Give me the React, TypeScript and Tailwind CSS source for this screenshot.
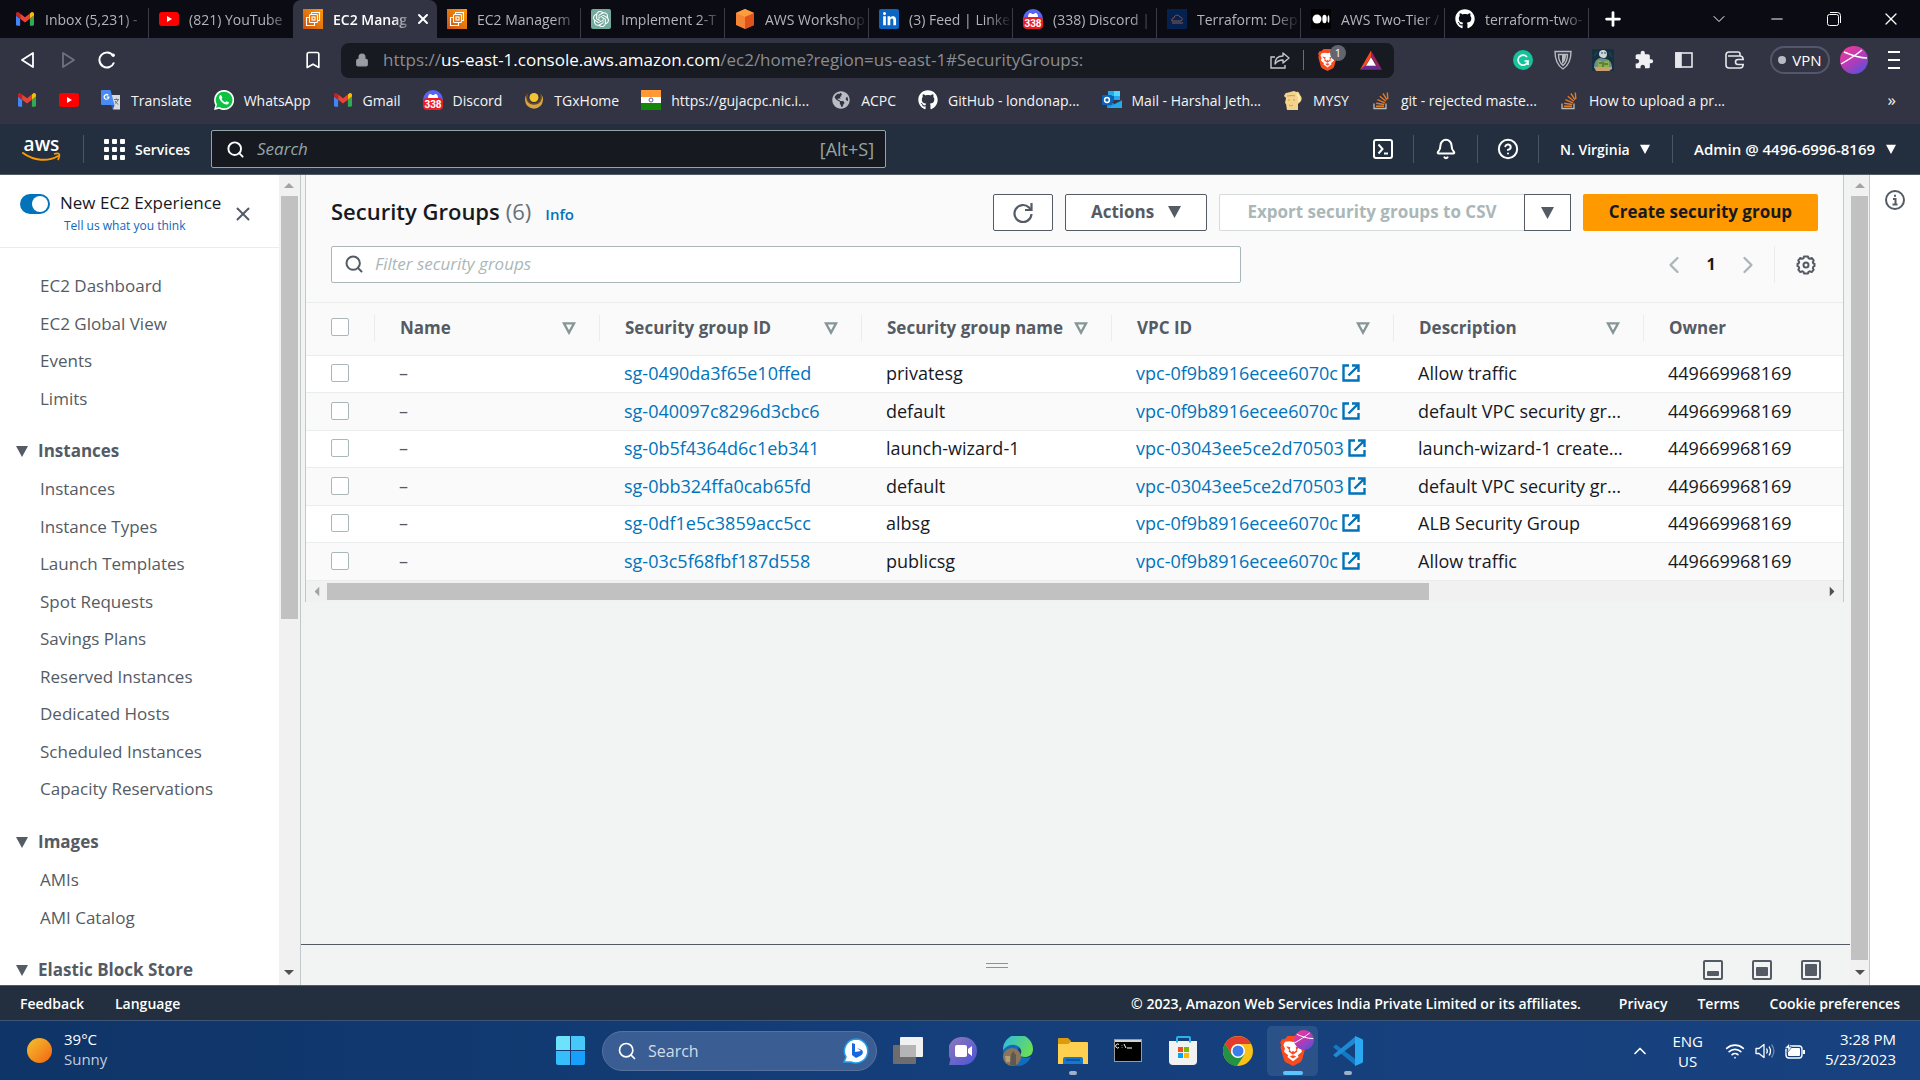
import { useState, type ReactNode } from 'react'
import {
  Bell,
  Bookmark,
  ChevronDown,
  ChevronLeft,
  ChevronRight,
  ChevronUp,
  CircleHelp,
  Lock,
  Minus,
  Plus,
  Search,
  Wifi,
  X,
} from 'lucide-react'
import { FaGithub, FaLinkedinIn, FaGlobeAmericas } from 'react-icons/fa'
import { SiOpenai } from 'react-icons/si'

/* ---------- brand icons ---------- */

const GmailIcon = () => (
  <svg viewBox="0 0 24 18" className="w-[18px] h-[14px] mx-px">
    <path d="M1.600 18h3.900V8.600L0 4.400v12C0 17.300.7 18 1.600 18z" fill="#4285f4" />
    <path d="M18.500 18h3.900c.9 0 1.600-.7 1.600-1.600v-12l-5.500 4.200z" fill="#34a853" />
    <path d="M18.500 1.600v7L24 4.400V2.200c0-2-2.300-3.200-3.900-2z" fill="#fbbc04" />
    <path d="M5.500 8.600v-7L12 6.500l6.500-4.900v7L12 13.500z" fill="#ea4335" />
    <path d="M0 2.200v2.200l5.500 4.200v-7L3.900.2C2.300-1 0 .2 0 2.200z" fill="#c5221f" />
  </svg>
)

const YoutubeIcon = () => (
  <svg viewBox="0 0 20 20" className="size-5">
    <rect y="3" width="20" height="14" rx="3" fill="#f00" />
    <path d="M8 7v6l5-3z" fill="#fff" />
  </svg>
)

const Ec2Icon = () => (
  <svg viewBox="0 0 20 20" className="size-5">
    <defs>
      <linearGradient id="ec2" x1="0" y1="1" x2="1" y2="0">
        <stop offset="0" stopColor="#c8511b" />
        <stop offset="1" stopColor="#f90" />
      </linearGradient>
    </defs>
    <rect width="20" height="20" fill="url(#ec2)" />
    <g fill="none" stroke="#fff" strokeWidth="1.100">
      <path d="M6.500 8.500h-3v8h8v-3" />
      <rect x="6.500" y="5.500" width="8" height="8" rx="1" />
      <rect x="9" y="8" width="3" height="3" />
      <path d="M8.500 5.500v-2h8v8h-2" />
    </g>
  </svg>
)

const OpenAiIcon = () => (
  <span className="size-5 rounded-xs bg-[#74aa9c] grid place-items-center">
    <SiOpenai className="size-4 text-white" />
  </span>
)

const WorkshopIcon = () => (
  <svg viewBox="0 0 20 20" className="size-5">
    <path d="M10 0l9 4v12l-9 4-9-4V4z" fill="#f58536" />
    <path d="M10 0l9 4-9 4-9-4z" fill="#ff9d3c" />
    <path d="M10 8l9-4v12l-9 4z" fill="#e0521b" />
  </svg>
)

const LinkedInIcon = () => (
  <span className="grid size-5 place-items-center rounded-xs bg-[#0a66c2]">
    <FaLinkedinIn className="size-[15px] text-white" />
  </span>
)

const DiscordIcon = () => (
  <svg viewBox="0 0 20 20" className="size-5">
    <circle cx="10" cy="10" r="10" fill="#5865f2" />
    <path d="M5 9c0-4 1-5 3-5l1 1h2l1-1c2 0 3 1 3 5z" fill="#fff" />
    <rect y="8" width="20" height="12" rx="4" fill="#ed1c24" />
    <text x="10" y="18" fontSize="10" fontWeight="700" fill="#fff" textAnchor="middle" fontFamily="Roboto, sans-serif">
      338
    </text>
  </svg>
)

const TerraformTabIcon = () => (
  <svg viewBox="0 0 20 20" className="size-5">
    <rect width="20" height="20" fill="#04214f" />
    <path d="M5 12c-1-2 1-3 2-3 0-3 5-4 6-1 2 0 3 3 1 4zM5 14h11" fill="none" stroke="#8a5a4a" strokeWidth="1" />
  </svg>
)

const MediumIcon = () => (
  <svg viewBox="0 0 20 20" className="size-5">
    <rect width="20" height="20" fill="#000" />
    <circle cx="6" cy="10" r="4.500" fill="#fff" />
    <ellipse cx="13.500" cy="10" rx="2.200" ry="4.200" fill="#fff" />
    <ellipse cx="17.500" cy="10" rx=".9" ry="3.800" fill="#fff" />
  </svg>
)

const GithubIcon = () => <FaGithub className="size-5 text-white" />

const TranslateIcon = () => (
  <svg viewBox="0 0 20 20" className="size-5">
    <path d="M8 5h11v14.500h-7z" fill="#d8dade" />
    <path d="M1 0h8.500l4 15H1a1 1 0 0 1-1-1V1a1 1 0 0 1 1-1z" fill="#4a8af4" />
    <path d="M10 15h3.500l-1.500 4.500z" fill="#2a56c6" />
    <path d="M8.500 6.500H5.800v1.200h1.300a1.700 1.700 0 1 1-.4-2l1-.9a3 3 0 1 0 .8 1.700z" fill="#fff" />
    <path d="M13 9.500h5M15.500 8.500v1M17 9.500c-.5 2-2 3.500-3 4M14 11l3 3.500" stroke="#6a7480" strokeWidth="1" fill="none" />
  </svg>
)

const WhatsappIcon = () => (
  <svg viewBox="0 0 20 20" className="size-5">
    <path d="M10 0a10 10 0 0 0-8.600 15L0 20l5.200-1.300A10 10 0 1 0 10 0z" fill="#fff" />
    <path d="M10 1.700a8.300 8.300 0 0 0-7 12.700l-.9 3.400 3.500-.9A8.300 8.300 0 1 0 10 1.700z" fill="#0dc143" />
    <path
      d="M7.300 5.500c-.3-.6-1-.5-1.500 0-1.500 1.500-.7 3.500 1.200 5.700 2.200 2.600 5 4 6.800 3 1-.6 1.200-1.500 1-1.900l-2.200-1.100c-.5 0-.8.9-1.300 1.100-1.400-.3-3.200-2-3.700-3.300.1-.5.8-.9.700-1.400z"
      fill="#fff"
    />
  </svg>
)

const TgxIcon = () => (
  <svg viewBox="0 0 20 20" className="size-5">
    <path d="M3 4a9 9 0 1 0 14 0c1 7-1 10-7 10S2 11 3 4z" fill="#d9a441" />
    <circle cx="10" cy="7.500" r="4.500" fill="#f3c52f" />
    <path d="M3 4c-1 6 2 10 7 10s8-4 7-10" fill="none" stroke="#6b4a1d" strokeWidth="1.500" />
  </svg>
)

const IndiaIcon = () => (
  <svg viewBox="0 0 20 20" className="size-5">
    <path d="M0 0h20v7H0z" fill="#ff9933" />
    <path d="M0 7h20v7H0z" fill="#fff" />
    <path d="M0 13h20v7H0z" fill="#138808" />
    <circle cx="10" cy="10" r="2" fill="none" stroke="#5b5bb0" />
  </svg>
)

const GlobeIcon = () => <FaGlobeAmericas className="size-[18px] mx-px text-[#b9bcc2]" />

const OutlookIcon = () => (
  <svg viewBox="0 0 20 20" className="size-5">
    <path d="M6 1h12v9H6z" fill="#28a8ea" />
    <path d="M12 1h6v5h-6z" fill="#50d9ff" />
    <path d="M6 6h6v6H6z" fill="#0364b8" />
    <path d="M5 10l7.500 4L20 10v8H5z" fill="#1490df" />
    <path d="M5 18l15-7v7z" fill="#28a8ea" />
    <rect y="5" width="10" height="10" rx="1" fill="#0a63b8" />
    <circle cx="5" cy="10" r="2.400" fill="none" stroke="#fff" strokeWidth="1.500" />
  </svg>
)

const MysyIcon = () => (
  <svg viewBox="0 0 20 20" className="size-5">
    <path d="M2 4c1-2 4-1 5-2 2 0 4-2 6 0 3-1 3 1 4 3 2 2 2 4 1 6l-3 3v6H4l-1-6-1-1 1-5-2-2z" fill="#f3d48a" />
    <path d="M4 6c3 0 5-1 8 0M5 10h2M10 10h2M6 15c2 1 3 1 4 0" stroke="#c9985a" fill="none" />
    <path d="M14 4c2 2 3 4 2 8" stroke="#fbeab8" strokeWidth="2" fill="none" />
  </svg>
)

const StackIcon = () => (
  <svg viewBox="0 0 20 20" className="size-5">
    <path d="M3 13.500v5h12v-5" fill="none" stroke="#bcbbbb" strokeWidth="1.300" />
    <path
      d="M5 16.200h8M5.200 13.200l8 1.300M6.400 9.700l7.500 3.200M8.800 6.300l6.100 5M12 3.500l4 6.300M16.300 2.500l.5 6.500"
      stroke="#e07b28"
      strokeWidth="1.400"
    />
  </svg>
)

const BraveIcon = ({ className }: { className: string }) => (
  <svg viewBox="0 0 24 28" className={className}>
    <path d="M7 0h10l3 3 2-.3L24 6l-1 2.500.7 2-3 11c-.5 1.500-1 2.300-2.300 3.200L12 28l-6.400-3.300c-1.300-.9-1.800-1.700-2.300-3.200l-3-11 .7-2L0 6l2-3.300L4 3z" fill="#fb4a1e" />
    <path
      d="M12 5.500l3-.7 4.500.6 1.500 3-1.500 3 .8 3.300-3.800 3.300.7 1.500-5.200 4-5.200-4 .7-1.500-3.800-3.300.8-3.300L3 8.400l1.500-3L9 4.800z"
      fill="#fff"
    />
    <path d="M5.500 9.500l4 1-.5 2.500 1.500 2L12 14l1.500 1 1.500-2-.5-2.500 4-1-3 3.500.7 1.500-4.200 3-4.200-3 .7-1.500zM9 19l3 2 3-2-3-1z" fill="#fb4a1e" />
  </svg>
)

const BatIcon = () => (
  <svg viewBox="0 0 24 21" className="h-[20px] w-[22px]">
    <path d="M12 0L0 21l6-4 6-10z" fill="#ff4724" />
    <path d="M12 0l12 21-6-4-6-10z" fill="#9e1f63" />
    <path d="M0 21h24l-6-4.500H6z" fill="#662d91" />
    <path d="M12 7.500l5.500 9.300h-11z" fill="#fff" />
  </svg>
)

const ProfileOrb = ({ id, className }: { id: string; className: string }) => (
  <svg viewBox="0 0 28 28" className={className}>
    <defs>
      <linearGradient id={id} x1="0.200" y1="0" x2="0.900" y2="1">
        <stop offset="0" stopColor="#f0389a" />
        <stop offset="0.500" stopColor="#b23bb8" />
        <stop offset="1" stopColor="#4b55e0" />
      </linearGradient>
    </defs>
    <circle cx="14" cy="14" r="14" fill={`url(#${id})`} />
    <path d="M1 18C8 14 16 9 22 4M4 6c7 3 14 6 23 6" fill="none" stroke="#fff" strokeWidth="1.400" />
  </svg>
)

const StatueIcon = () => (
  <svg viewBox="0 0 22 22" className="size-[22px]">
    <rect width="22" height="22" rx="1" fill="#123240" />
    <path d="M11 1c3 0 4 2 4 4s-1 4-3 4-5-1-5-4 2-4 4-4z" fill="#cdd6da" />
    <path d="M2 19c0-6 2-9 6-10l6 1c4 1 6 4 6 9z" fill="#6f8a93" />
    <path d="M9 4h2M12 4h2M5 3l-3 4M17 3l3 5" stroke="#2c4a55" />
    <path d="M6 11l5 2 6-2v7l-6 1-5-1z" fill="#8bb04a" />
    <path d="M11 13v6M7 14h3M12 15h4" stroke="#31551c" strokeWidth="1" />
    <path d="M2 18h18v2l-3 2H4z" fill="#c9a070" />
  </svg>
)

const CaretDown = ({ className }: { className: string }) => (
  <svg viewBox="0 0 12 12" className={className}>
    <path d="M0 1h12L6 12z" fill="currentColor" />
  </svg>
)

const ScrollArrow = ({ className }: { className: string }) => (
  <svg viewBox="0 0 10 5" className={className}>
    <path d="M0 0h10L5 5z" fill="currentColor" />
  </svg>
)

const ExternalIcon = () => (
  <svg viewBox="0 0 18 18" className="size-[18px] text-[#0073bb]" fill="none" stroke="currentColor" strokeWidth="2.400">
    <path d="M7 1.500H1.500v15h15V11M10 1.500h6.500V8M16 2L6.500 11.500" />
  </svg>
)

/* ---------- browser chrome ---------- */

const tabs: { title: string; icon: ReactNode; active?: boolean }[] = [
  { title: 'Inbox (5,231) -', icon: <GmailIcon /> },
  { title: '(821) YouTube', icon: <YoutubeIcon /> },
  { title: 'EC2 Manag', icon: <Ec2Icon />, active: true },
  { title: 'EC2 Managem', icon: <Ec2Icon /> },
  { title: 'Implement 2-T', icon: <OpenAiIcon /> },
  { title: 'AWS Workshop', icon: <WorkshopIcon /> },
  { title: '(3) Feed | Linke', icon: <LinkedInIcon /> },
  { title: '(338) Discord |', icon: <DiscordIcon /> },
  { title: 'Terraform: Dep', icon: <TerraformTabIcon /> },
  { title: 'AWS Two-Tier /', icon: <MediumIcon /> },
  { title: 'terraform-two-', icon: <GithubIcon /> },
]

const bookmarks: { label: string; icon: ReactNode }[] = [
  { label: 'Translate', icon: <TranslateIcon /> },
  { label: 'WhatsApp', icon: <WhatsappIcon /> },
  { label: 'Gmail', icon: <GmailIcon /> },
  { label: 'Discord', icon: <DiscordIcon /> },
  { label: 'TGxHome', icon: <TgxIcon /> },
  { label: 'https://gujacpc.nic.i...', icon: <IndiaIcon /> },
  { label: 'ACPC', icon: <GlobeIcon /> },
  { label: 'GitHub - londonap...', icon: <GithubIcon /> },
  { label: 'Mail - Harshal Jeth...', icon: <OutlookIcon /> },
  { label: 'MYSY', icon: <MysyIcon /> },
  { label: 'git - rejected maste...', icon: <StackIcon /> },
  { label: 'How to upload a pr...', icon: <StackIcon /> },
]

const TabBar = () => (
  <div className="flex h-[38px] shrink-0 items-stretch bg-[#0b0b14] pl-[5px] text-[14px] text-[#b4b4ba]">
    {tabs.map((tab, i) => (
      <button
        key={i}
        aria-label={tab.title}
        className={`flex w-36 items-center gap-2.5 pl-2.5 ${
          tab.active ? 'rounded-t-lg bg-[#323443] pr-1.5 font-semibold text-white' : ''
        }`}
      >
        <span className="shrink-0">{tab.icon}</span>
        <span className="min-w-0 flex-1 overflow-hidden text-left whitespace-nowrap [mask-image:linear-gradient(to_right,black_75%,transparent)]">
          {tab.title}
        </span>
        {tab.active && <X className="-ml-2 size-4 shrink-0" strokeWidth={3} />}
        {!tab.active && i !== 1 && <span className="-ml-2.5 mt-2 w-px self-stretch bg-[#3a3b46]" />}
      </button>
    ))}
    <button aria-label="New tab" className="ml-[13px] text-white">
      <Plus className="size-[22px]" strokeWidth={3} />
    </button>
    <div className="ml-auto flex items-center text-white">
      <button aria-label="Search tabs" className="grid w-[58px] place-items-center">
        <ChevronDown className="size-5" strokeWidth={1.2} />
      </button>
      <button aria-label="Minimize" className="grid w-[57px] place-items-center">
        <Minus className="size-[18px]" strokeWidth={1.3} />
      </button>
      <button aria-label="Restore" className="grid w-[57px] place-items-center">
        <svg viewBox="0 0 14 14" className="size-[14px]" fill="none" stroke="currentColor">
          <rect x=".5" y="2.500" width="11" height="11" rx="2" />
          <path d="M3 .5h7.500a3 3 0 0 1 3 3V11" />
        </svg>
      </button>
      <button aria-label="Close window" className="grid w-[58px] place-items-center">
        <X className="size-5" strokeWidth={1.5} />
      </button>
    </div>
  </div>
)

const Toolbar = () => (
  <div className="flex h-11 shrink-0 items-center bg-[#323443] pr-5 text-white">
    <div className="flex w-[341px] items-center pl-5">
      <button aria-label="Back" className="w-10">
        <svg viewBox="0 0 16 18" className="h-[18px] w-4" fill="none" stroke="#fff" strokeWidth="1.800" strokeLinejoin="round">
          <path d="M13 2v14L2 9z" />
        </svg>
      </button>
      <button aria-label="Forward" className="w-[38px]">
        <svg viewBox="0 0 16 18" className="h-[18px] w-4" fill="none" stroke="#70717d" strokeWidth="1.800" strokeLinejoin="round">
          <path d="M3 2v14l11-7z" />
        </svg>
      </button>
      <button aria-label="Reload">
        <svg viewBox="0 0 18 18" className="size-[18px]" fill="none" stroke="#fff" strokeWidth="2">
          <path d="M16 11.500A7.500 7.500 0 1 1 15 4.500" />
          <circle cx="15.200" cy="4.200" r="1.700" fill="#fff" stroke="none" />
        </svg>
      </button>
      <button aria-label="Bookmark this page" className="mr-[18px] ml-auto">
        <Bookmark className="size-5" />
      </button>
    </div>
    <div className="flex h-[35px] min-w-0 flex-1 items-center rounded-lg bg-[#181a21] pr-3 pl-[14px]">
      <Lock className="size-[14px] text-[#9a9ba3]" fill="currentColor" />
      <span className="ml-[14px] flex-1 text-[17px] whitespace-nowrap text-[#8b8c93]">
        https://<span className="text-white">us-east-1.console.aws.amazon.com</span>/ec2/home?region=us-east-1#SecurityGroups:
      </span>
      <button aria-label="Share" className="mr-[13px]">
        <svg viewBox="0 0 20 18" className="h-[18px] w-5" fill="none" stroke="#c5c6cb" strokeWidth="1.400">
          <path d="M5 6H1v11h14v-3" />
          <path d="M13 2l6 5-6 5V9c-4 0-6 1-8 4 0-5 3-8 8-8z" strokeLinejoin="round" />
        </svg>
      </button>
      <span className="mr-3.5 h-5 w-px bg-[#6c6d76]" />
      <button aria-label="Brave Shields" className="relative mr-[18px] w-6">
        <BraveIcon className="h-[22px] w-[19px]" />
        <span className="absolute -top-1 left-3 grid size-4 place-items-center rounded-full bg-[#62646f] text-[11px] text-white">1</span>
      </button>
      <button aria-label="Rewards">
        <BatIcon />
      </button>
    </div>
    <div className="ml-[119px] flex items-center">
      <span className="grid size-5 place-items-center rounded-full bg-[#15c39a]">
        <svg viewBox="0 0 12 12" className="size-3" fill="none" stroke="#fff" strokeWidth="1.600">
          <path d="M10 3a5 5 0 1 0 1 4H7.500M11 7v4" />
        </svg>
      </span>
      <svg viewBox="0 0 18 20" className="ml-[21px] h-5 w-[18px]" fill="none" stroke="#b9bac0" strokeWidth="1.400">
        <path d="M1 1.500h16C17 10 14.500 15.500 9 19 3.500 15.500 1 10 1 1.500z" />
        <path d="M4.500 4.500h9c0 5-1.500 8.500-4.500 11-3-2.500-4.500-6-4.500-11z" />
        <path d="M8 5h4c0 4-1 7-4 9z" fill="#b9bac0" stroke="none" />
      </svg>
      <span className="ml-5">
        <StatueIcon />
      </span>
      <svg viewBox="0 0 24 24" className="ml-5 size-5" fill="#f0f0f3">
        <path d="M20.500 11H19V7c0-1.100-.9-2-2-2h-4V3.500C13 2.120 11.880 1 10.500 1S8 2.120 8 3.500V5H4c-1.100 0-2 .9-2 2v3.800h1.500c1.490 0 2.700 1.210 2.700 2.700s-1.210 2.700-2.700 2.700H2V20c0 1.100.9 2 2 2h3.800v-1.500c0-1.490 1.210-2.700 2.700-2.700s2.700 1.210 2.700 2.700V22H17c1.100 0 2-.9 2-2v-4h1.500a2.500 2.500 0 0 0 0-5z" />
      </svg>
      <svg viewBox="0 0 18 16" className="ml-[21px] h-4 w-[18px]" fill="none" stroke="#e6e6ea" strokeWidth="1.600">
        <rect x="1" y="1" width="16" height="14" />
        <path d="M1 1h5v14H1z" fill="#e6e6ea" />
      </svg>
      <svg viewBox="0 0 20 18" className="ml-8 h-[18px] w-5" fill="none" stroke="#e6e6ea" strokeWidth="1.600">
        <path d="M15 5V3a2 2 0 0 0-2-2H4a3 3 0 0 0-3 3v10a3 3 0 0 0 3 3h11a3 3 0 0 0 3-3V8a3 3 0 0 0-3-3H3" />
        <path d="M19 8.500h-6a2.500 2.500 0 0 0 0 5h6" fill="#323443" />
      </svg>
      <button className="ml-[25px] flex h-[28px] w-[60px] items-center justify-center gap-1.5 rounded-full border-2 border-[#53556a] text-[15px]">
        <span className="size-2 rounded-full bg-[#b9bac4]" />
        VPN
      </button>
      <ProfileOrb id="orb-nav" className="ml-2.5 size-7" />
      <button aria-label="Menu" className="ml-5 flex w-3 flex-col gap-1.5">
        <span className="h-0.5 bg-white" />
        <span className="h-0.5 bg-white" />
        <span className="h-0.5 bg-white" />
      </button>
    </div>
  </div>
)

const BookmarksBar = () => (
  <div className="flex h-[42px] shrink-0 items-center gap-[22px] bg-[#323443] pr-6 pb-1.5 pl-[17px] text-[14px] whitespace-nowrap text-[#f4f4f6]">
    <a href="#gmail" aria-label="Gmail">
      <GmailIcon />
    </a>
    <a href="#youtube" aria-label="YouTube">
      <YoutubeIcon />
    </a>
    {bookmarks.map((b) => (
      <a key={b.label} href="#bookmark" className="flex items-center gap-2.5">
        {b.icon}
        {b.label}
      </a>
    ))}
    <button aria-label="More bookmarks" className="ml-auto text-[17px]">
      »
    </button>
  </div>
)

/* ---------- AWS console ---------- */

const AwsHeader = () => (
  <header className="flex h-[51px] shrink-0 items-center border-b border-[#545b64] bg-[#232f3e] text-[15px] font-semibold text-white">
    <a href="#home" aria-label="AWS home" className="flex w-[83px] flex-col items-center">
      <span className="text-[19px] leading-[16px] font-semibold">aws</span>
      <svg viewBox="0 0 40 11" className="h-[11px] w-10" fill="none" stroke="#f90" strokeWidth="2">
        <path d="M1 1c11 8 25 9 35 3" strokeLinecap="round" />
        <path d="M32 2c5-1.500 7-.5 4 6" strokeWidth="1.800" />
      </svg>
    </a>
    <span className="h-7 w-px bg-[#4a5562]" />
    <button className="ml-5 flex items-center gap-2.5 text-[14px]">
      <span className="grid grid-cols-3 gap-[3px]">
        {Array.from({ length: 9 }, (_, i) => (
          <span key={i} className="size-[5px] rounded-[1px] bg-white" />
        ))}
      </span>
      Services
    </button>
    <label className="ml-[21px] flex h-[38px] w-[675px] items-center rounded-xs border border-[#95a5a6] bg-[#16191f] px-3.5">
      <Search className="size-[19px]" strokeWidth={2.4} />
      <input
        type="search"
        aria-label="Search"
        placeholder="Search"
        className="ml-3 min-w-0 flex-1 bg-transparent text-[17px] font-normal italic outline-none placeholder:text-[#95a5a6]"
      />
      <span className="mr-[-3px] text-[18px] font-normal text-[#95a5a6]">[Alt+S]</span>
    </label>
    <div className="ml-auto flex items-center">
      <button aria-label="CloudShell" className="grid w-[60px] place-items-center">
        <svg viewBox="0 0 20 20" className="size-5" fill="none" stroke="currentColor" strokeWidth="2">
          <rect x="1" y="1" width="18" height="18" rx="2" />
          <path d="M5.500 5.500l4 4.500-4 4.500M11 14.500h4" />
        </svg>
      </button>
      <span className="h-7 w-px bg-[#4a5562]" />
      <button aria-label="Notifications" className="grid w-[63px] place-items-center">
        <Bell className="size-[22px]" strokeWidth={2.2} />
      </button>
      <span className="h-7 w-px bg-[#4a5562]" />
      <button aria-label="Help" className="grid w-[60px] place-items-center">
        <CircleHelp className="size-[22px]" strokeWidth={2.2} />
      </button>
      <span className="h-7 w-px bg-[#4a5562]" />
      <button className="flex w-[133px] items-center justify-between pr-[22px] pl-[21px] text-[14px]">
        N. Virginia <CaretDown className="size-2.5" />
      </button>
      <span className="h-7 w-px bg-[#4a5562]" />
      <button className="flex w-[247px] items-center justify-between pr-6 pl-[21px]">
        Admin @ 4496-6996-8169 <CaretDown className="size-2.5" />
      </button>
    </div>
  </header>
)

const navGroups: { heading?: string; items: string[] }[] = [
  { items: ['EC2 Dashboard', 'EC2 Global View', 'Events', 'Limits'] },
  {
    heading: 'Instances',
    items: [
      'Instances',
      'Instance Types',
      'Launch Templates',
      'Spot Requests',
      'Savings Plans',
      'Reserved Instances',
      'Dedicated Hosts',
      'Scheduled Instances',
      'Capacity Reservations',
    ],
  },
  { heading: 'Images', items: ['AMIs', 'AMI Catalog'] },
  { heading: 'Elastic Block Store', items: [] },
]

const Sidebar = () => {
  const [newExperience, setNewExperience] = useState(true)

  return (
    <aside className="flex w-[301px] shrink-0 border-r border-[#c3c9cb] bg-white">
      <div className="min-w-0 flex-1 overflow-hidden">
        <div className="flex h-[73px] items-start border-b border-[#eaeded] pt-4 pl-5">
          <label className="flex items-start gap-2.5">
            <input
              type="checkbox"
              aria-label="New EC2 Experience"
              checked={newExperience}
              onChange={(e) => setNewExperience(e.target.checked)}
              className="peer sr-only"
            />
            <span className="mt-[3px] flex h-5 w-[30px] justify-end rounded-full bg-[#0073bb] p-0.5">
              <span className="size-4 rounded-full bg-white" />
            </span>
            <span className="text-[17px] leading-[24px] whitespace-nowrap text-[#16191f]">
              New EC2 Experience
              <a href="#feedback" className="block pl-1 text-[12px] leading-[22px] text-[#1166bb]">
                Tell us what you think
              </a>
            </span>
          </label>
          <button aria-label="Close navigation" className="mt-3 mr-[25px] ml-auto text-[#545b64]">
            <X className="size-[22px]" strokeWidth={2.2} />
          </button>
        </div>
        <nav className="mt-[19px] text-[17px] text-[#545b64]">
          {navGroups.map((group, i) => (
            <div key={i} className="mb-[15px]">
              {group.heading && (
                <button className="flex h-[38px] items-center gap-2.5 pl-4 font-bold">
                  <CaretDown className="size-3" />
                  {group.heading}
                </button>
              )}
              <ul>
                {group.items.map((item) => (
                  <li key={item} className="flex h-[38px] items-center pl-10 even:h-[37px]">
                    <a href="#nav">{item}</a>
                  </li>
                ))}
              </ul>
            </div>
          ))}
        </nav>
      </div>
      <div className="flex w-[21px] flex-col items-center bg-[#f1f1f1] pr-px">
        <ScrollArrow className="mt-2 h-[5px] w-2.5 rotate-180 text-[#a3a3a3]" />
        <div className="mt-2 h-[423px] w-[17px] bg-[#c1c1c1]" />
        <ScrollArrow className="mt-auto mb-2.5 h-[5px] w-2.5 text-[#505050]" />
      </div>
    </aside>
  )
}

const columns = [
  { label: 'Name', width: 'w-[225px]' },
  { label: 'Security group ID', width: 'w-[262px]' },
  { label: 'Security group name', width: 'w-[250px]' },
  { label: 'VPC ID', width: 'w-[282px]' },
  { label: 'Description', width: 'w-[250px]' },
]

const rows = [
  { id: 'sg-0490da3f65e10ffed', name: 'privatesg', vpc: 'vpc-0f9b8916ecee6070c', description: 'Allow traffic' },
  { id: 'sg-040097c8296d3cbc6', name: 'default', vpc: 'vpc-0f9b8916ecee6070c', description: 'default VPC security gr…' },
  { id: 'sg-0b5f4364d6c1eb341', name: 'launch-wizard-1', vpc: 'vpc-03043ee5ce2d70503', description: 'launch-wizard-1 create…' },
  { id: 'sg-0bb324ffa0cab65fd', name: 'default', vpc: 'vpc-03043ee5ce2d70503', description: 'default VPC security gr…' },
  { id: 'sg-0df1e5c3859acc5cc', name: 'albsg', vpc: 'vpc-0f9b8916ecee6070c', description: 'ALB Security Group' },
  { id: 'sg-03c5f68fbf187d558', name: 'publicsg', vpc: 'vpc-0f9b8916ecee6070c', description: 'Allow traffic' },
]

const Checkbox = ({ label }: { label: string }) => (
  <input
    type="checkbox"
    aria-label={label}
    className="block size-[18px] appearance-none rounded-xs border border-[#aab7b8] bg-white checked:bg-[#0073bb]"
  />
)

const SecurityGroupsTable = () => (
  <table className="w-full table-fixed border-collapse text-left text-[18px] leading-6 whitespace-nowrap text-[#16191f]">
    <thead>
      <tr className="h-[53px] border-y border-[#eaeded] text-[17px] text-[#545b64]">
        <th className="w-[68px] pb-1 pl-[25px]">
          <Checkbox label="Select all" />
        </th>
        {columns.map((col) => (
          <th key={col.label} className={`${col.width} p-0 pb-0.5 font-bold`}>
            <div className="flex h-[26px] items-center justify-between border-l border-[#eaeded] pr-[23px] pl-[25px]">
              {col.label}
              <svg viewBox="0 0 12 12" className="size-3.5 shrink-0" fill="none" stroke="#879596" strokeWidth="2">
                <path d="M1.600 2h8.800L6 10z" />
              </svg>
            </div>
          </th>
        ))}
        <th className="p-0 pb-0.5 font-bold">
          <div className="flex h-[26px] items-center border-l border-[#eaeded] pl-[25px]">Owner</div>
        </th>
      </tr>
    </thead>
    <tbody>
      {rows.map((row) => (
        <tr key={row.id} className="h-[37px] border-b border-[#eaeded] bg-white even:h-[38px] even:bg-[#fafafa]">
          <td className="pb-0.5 pl-[25px]">
            <Checkbox label={`Select ${row.id}`} />
          </td>
          <td className="p-0 pb-0.5 pl-[25px] text-[#545b64]">–</td>
          <td className="p-0 pb-0.5 pl-[25px]">
            <a href="#sg" className="text-[#0073bb]">
              {row.id}
            </a>
          </td>
          <td className="p-0 pb-0.5 pl-[25px]">{row.name}</td>
          <td className="p-0 pb-0.5 pl-[25px]">
            <a href="#vpc" className="flex items-center gap-1 text-[#0073bb]">
              {row.vpc}
              <ExternalIcon />
            </a>
          </td>
          <td className="p-0 pb-0.5 pl-[25px]">{row.description}</td>
          <td className="p-0 pb-0.5 pl-[25px]">449669968169</td>
        </tr>
      ))}
    </tbody>
  </table>
)

const PanelIcon = ({ y }: { y: number }) => (
  <svg viewBox="0 0 20 20" className="size-5" fill="none" stroke="#545b64" strokeWidth="2">
    <rect x="1" y="1" width="18" height="18" rx="1" />
    <rect x="4" y={y} width="12" height={16 - y} rx="1" fill="#545b64" stroke="none" />
  </svg>
)

const MainPanel = () => (
  <main className="flex min-w-0 flex-1 flex-col bg-[#f2f3f3]">
    <section className="mr-1.5 ml-1 border-x border-[#c3c9cb] bg-[#fafafa]">
      <div className="flex items-center gap-3 pt-[19px] pr-[25px] pl-[25px] text-[17px] leading-6 font-bold whitespace-nowrap text-[#545b64]">
        <h1 className="mr-auto flex items-baseline text-[22px] font-semibold text-[#16191f]">
          Security Groups
          <span className="ml-1.5 font-normal text-[#687078]">(6)</span>
          <a href="#info" className="ml-3.5 text-[15px] text-[#0073bb]">
            Info
          </a>
        </h1>
        <button aria-label="Refresh" className="grid h-[37px] w-[60px] place-items-center rounded-xs border border-[#545b64] bg-white">
          <svg viewBox="0 0 20 20" className="size-5" fill="none" stroke="currentColor" strokeWidth="2.200">
            <path d="M18.500 11A8.500 8.500 0 1 1 16 4.500L18 6.500" />
            <path d="M18.500 0v7H12" />
          </svg>
        </button>
        <button className="flex h-[37px] w-[142px] items-center justify-center gap-3.5 rounded-xs border border-[#545b64] bg-white pb-0.5">
          Actions <CaretDown className="size-[13px]" />
        </button>
        <div className="flex">
          <button disabled className="h-[37px] w-[305px] rounded-l-xs border border-r-0 border-[#d5dbdb] bg-white pb-0.5 text-[#aab7b8]">
            Export security groups to CSV
          </button>
          <button aria-label="Export options" className="grid h-[37px] w-[47px] place-items-center border border-[#545b64] bg-white">
            <CaretDown className="size-[13px]" />
          </button>
        </div>
        <button className="h-[37px] w-[235px] rounded-xs bg-[#ff9900] pb-0.5 text-[#16191f]">Create security group</button>
      </div>
      <div className="flex items-center pt-[15px] pr-[27px] pb-[19px] pl-[25px]">
        <label className="flex h-[37px] w-[910px] items-center rounded-xs border border-[#aab7b8] bg-white pb-0.5 pl-3 text-[#545b64]">
          <Search className="size-5" strokeWidth={2.4} />
          <input
            aria-label="Filter security groups"
            placeholder="Filter security groups"
            className="ml-[11px] flex-1 bg-transparent text-[17px] italic outline-none placeholder:text-[#aab7b8]"
          />
        </label>
        <div className="ml-auto flex items-center text-[16px] leading-6 font-bold text-[#16191f]">
          <button aria-label="Previous page" className="text-[#aab7b8]">
            <ChevronLeft className="size-7" />
          </button>
          <span className="w-[46px] pb-0.5 text-center">1</span>
          <button aria-label="Next page" className="text-[#aab7b8]">
            <ChevronRight className="size-7" />
          </button>
          <span className="ml-3 h-[37px] w-px bg-[#eaeded]" />
          <button aria-label="Preferences" className="ml-[21px] text-[#545b64]">
            <svg viewBox="0 0 20 20" className="size-5" fill="none" stroke="currentColor" strokeWidth="2" strokeLinejoin="round">
              <path d="M8 1.500h4l.5 1.700 1.500.6 1.700-.8 2 2.400-.9 1.500.5 1.500 1.200.4v2.400l-1.200.5-.5 1.500.9 1.500-2 2.400-1.700-.8-1.500.6-.5 1.600H8l-.5-1.600-1.500-.6-1.700.8-2-2.400.9-1.500-.5-1.500-1.200-.5V8.800l1.200-.4.5-1.500-.9-1.500 2-2.400 1.700.8 1.500-.6z" />
              <circle cx="10" cy="10" r="2.500" />
            </svg>
          </button>
        </div>
      </div>
      <SecurityGroupsTable />
      <div className="flex h-[21px] items-center bg-[#f1f1f1]">
        <ScrollArrow className="ml-1.5 h-[5px] w-2.5 rotate-90 text-[#a3a3a3]" />
        <div className="ml-[5px] h-[17px] w-[1102px] bg-[#c1c1c1]" />
        <ScrollArrow className="mr-1.5 ml-auto h-[5px] w-2.5 -rotate-90 text-[#505050]" />
      </div>
    </section>
    <div className="mt-auto flex h-[41px] items-start border-t border-[#545b64]">
      <div className="flex flex-1 justify-center pt-[18px]">
        <span className="h-[5px] w-[22px] border-y border-[#879596]" />
      </div>
      <div className="flex gap-[29px] pt-[15px] pr-[29px] pl-2.5">
        <button aria-label="Small split panel">
          <PanelIcon y={11} />
        </button>
        <button aria-label="Medium split panel">
          <PanelIcon y={7} />
        </button>
        <button aria-label="Full split panel">
          <PanelIcon y={4} />
        </button>
      </div>
    </div>
  </main>
)

const Footer = () => (
  <footer className="flex h-[35px] shrink-0 items-center border-t border-[#545b64] bg-[#232f3e] px-5 text-[14px] font-semibold text-white">
    <a href="#feedback" className="w-[95px]">
      Feedback
    </a>
    <a href="#language">Language</a>
    <span className="mr-[38px] ml-auto">© 2023, Amazon Web Services India Private Limited or its affiliates.</span>
    <a href="#privacy" className="mr-[30px]">
      Privacy
    </a>
    <a href="#terms" className="mr-[30px]">
      Terms
    </a>
    <a href="#cookies">Cookie preferences</a>
  </footer>
)

/* ---------- Windows taskbar ---------- */

const taskbarApps: { name: string; icon: ReactNode; state?: 'open' | 'focused' }[] = [
  {
    name: 'Task View',
    icon: (
      <svg viewBox="0 0 30 28" className="h-7 w-[30px]">
        <rect y="8" width="23" height="19" rx="1" fill="#6d6d6d" />
        <rect x="7" width="23" height="20" rx="1" fill="#f1f1f1" />
        <path d="M7 8h16v12H7z" fill="#b5b5b5" />
      </svg>
    ),
  },
  {
    name: 'Chat',
    icon: (
      <svg viewBox="0 0 28 28" className="size-7">
        <defs>
          <linearGradient id="chat" x1="0" y1="0" x2="1" y2="1">
            <stop offset="0" stopColor="#8f7ab8" />
            <stop offset="1" stopColor="#4b53d8" />
          </linearGradient>
        </defs>
        <path d="M14 0a14 14 0 1 1 0 28H0l1.500-6A14 14 0 0 1 14 0z" fill="url(#chat)" />
        <rect x="6" y="8" width="12" height="12" rx="2" fill="#fff" />
        <path d="M19 12l4-3v10l-4-3z" fill="#fff" />
      </svg>
    ),
  },
  {
    name: 'Microsoft Edge',
    icon: (
      <svg viewBox="0 0 30 30" className="size-[30px]">
        <defs>
          <linearGradient id="edge" x1="0" y1="0" x2="1" y2="0.500">
            <stop offset="0" stopColor="#2bb8e8" />
            <stop offset="1" stopColor="#67dd5b" />
          </linearGradient>
        </defs>
        <path d="M0 15C1 7 12 5 17 11c-3 2-3 6 0 9 3 2 7 2 11 1-3 6-8 9-13 9A15 15 0 0 1 0 15z" fill="#0f6cbe" />
        <path d="M0 14A15 15 0 0 1 30 13c0 6-4 8-8 8-3 0-5-1-5-2 0 0 2-2 1-5C16 8 6 6 0 14z" fill="url(#edge)" />
        <circle cx="9" cy="21" r="9" fill="#8b7558" />
        <path d="M7 30l1-11 2-4 3 4v10z" fill="#5d5a56" />
        <path d="M2 20h5v6H3z" fill="#b29f73" />
      </svg>
    ),
  },
  {
    name: 'File Explorer',
    state: 'open',
    icon: (
      <svg viewBox="0 0 30 28" className="h-7 w-[30px]">
        <path d="M0 2a1 1 0 0 1 1-1h9l3 3v4H0z" fill="#dc9b0b" />
        <path d="M0 7h10l3-2h16a1 1 0 0 1 1 1v21H0z" fill="#ffd04f" />
        <path d="M5 27v-5a2 2 0 0 1 2-2h16a2 2 0 0 1 2 2v5z" fill="#1577cf" />
        <path d="M8 23h14" stroke="#0b4b92" strokeWidth="1.500" />
      </svg>
    ),
  },
  {
    name: 'Command Prompt',
    icon: (
      <svg viewBox="0 0 28 24" className="h-6 w-7">
        <rect x=".5" y=".5" width="27" height="22" fill="#000" stroke="#9a9a9a" />
        <path d="M1 1h26v2H1z" fill="#d5d5d5" />
        <path d="M5 5.500a2 2 0 1 0 0 3M8 6v.5M8 8v.5M10 5l2 4M13 9h5" stroke="#fff" fill="none" />
      </svg>
    ),
  },
  {
    name: 'Microsoft Store',
    icon: (
      <svg viewBox="0 0 30 30" className="size-[30px]">
        <path d="M1 5h28v20a4 4 0 0 1-4 4H5a4 4 0 0 1-4-4z" fill="#f2f2f2" />
        <path d="M9 6.500V2a1 1 0 0 1 1-1h11a1 1 0 0 1 1 1v4.500" fill="none" stroke="#28b4e8" strokeWidth="2" />
        <path d="M10 11h5v5h-5z" fill="#f25022" />
        <path d="M16 11h5v5h-5z" fill="#7fba00" />
        <path d="M10 17h5v5h-5z" fill="#00a4ef" />
        <path d="M16 17h5v5h-5z" fill="#ffb900" />
      </svg>
    ),
  },
  {
    name: 'Google Chrome',
    icon: (
      <svg viewBox="0 0 30 30" className="size-[30px]">
        <circle cx="15" cy="15" r="15" fill="#fbc116" />
        <path d="M2 7.500a15 15 0 0 0 12 22.500l7.500-11.500H9z" fill="#229342" />
        <path d="M2 7.500A15 15 0 0 1 28.100 8H15a7 7 0 0 0-6.500 10z" fill="#e33b2e" />
        <circle cx="15" cy="15" r="7" fill="#fff" />
        <circle cx="15" cy="15" r="5.500" fill="#3b7ded" />
      </svg>
    ),
  },
  {
    name: 'Brave',
    state: 'focused',
    icon: (
      <span className="relative">
        <BraveIcon className="h-[30px] w-[26px]" />
        <ProfileOrb id="orb-task" className="absolute -top-1.5 left-3.5 size-5" />
      </span>
    ),
  },
  {
    name: 'Visual Studio Code',
    state: 'open',
    icon: (
      <svg viewBox="0 0 30 30" className="size-[30px]">
        <path d="M0 11l3-2.500 20 15V30z" fill="#1279c4" />
        <path d="M0 19l3 2.500L23 6.500V0z" fill="#1f8ad2" />
        <path d="M22 0l7 3a1.500 1.500 0 0 1 1 1.500v21a1.500 1.500 0 0 1-1 1.500l-7 3z" fill="#2aa9f2" />
      </svg>
    ),
  },
]

const Taskbar = () => (
  <div className="flex h-[60px] shrink-0 items-center border-t border-[#3f5577] bg-linear-to-r from-[#0f3467] via-[#143f7b] to-[#17427f] text-[15px] leading-5 text-white">
    <div className="flex flex-1 items-center gap-3 pl-[27px]">
      <span className="size-[25px] rounded-full bg-linear-to-br from-[#f1c232] to-[#f2600c]" />
      <div className="pb-1">
        <div>39°C</div>
        <div className="text-[#c2cddd]">Sunny</div>
      </div>
    </div>
    <div className="flex items-center pl-2">
      <button aria-label="Start" className="mr-[17px] grid grid-cols-2 gap-px">
        <span className="size-[14px] rounded-tl-xs bg-[#6de3fb]" />
        <span className="size-[14px] rounded-tr-xs bg-[#46c8fb]" />
        <span className="size-[14px] rounded-bl-xs bg-[#38bdfb]" />
        <span className="size-[14px] rounded-br-xs bg-[#169ffb]" />
      </button>
      <label className="flex h-10 w-[275px] items-center rounded-full border border-[#56739f] bg-[#3a5d93] pr-[7px] pl-3.5">
        <Search className="size-5" />
        <input
          aria-label="Windows search"
          placeholder="Search"
          className="ml-[11px] min-w-0 flex-1 bg-transparent text-[16px] outline-none placeholder:text-[#d3dbe7]"
        />
        <svg viewBox="0 0 26 26" className="size-[26px]">
          <path d="M13 1a12 12 0 1 1-5 23H1l2-5A12 12 0 0 1 13 1z" fill="#fff" stroke="#1b9ff0" strokeWidth="1.500" />
          <path d="M9 5l3 1v8l6-1-4-3 5 2c2 3 0 5-2 6l-4 2-4-3z" fill="#1a68e0" />
        </svg>
      </label>
      <div className="ml-[3px] flex">
        {taskbarApps.map((app) => (
          <button
            key={app.name}
            aria-label={app.name}
            className={`relative grid h-[50px] w-[55px] place-items-center rounded-md ${
              app.state === 'focused' ? 'border-x-2 border-transparent bg-[#ffffff18] bg-clip-padding' : ''
            }`}
          >
            {app.icon}
            {app.state === 'open' && <span className="absolute bottom-px h-1 w-2 rounded-full bg-[#9fb0cb]" />}
            {app.state === 'focused' && <span className="absolute bottom-px h-1 w-5 rounded-full bg-[#5cc5fb]" />}
          </button>
        ))}
      </div>
    </div>
    <div className="flex flex-1 items-center justify-end pr-6 text-center">
      <button aria-label="Show hidden icons" className="mr-[22px]">
        <ChevronUp className="size-5" />
      </button>
      <div className="mr-[22px]">
        <div>ENG</div>
        <div>US</div>
      </div>
      <Wifi className="size-5" />
      <svg viewBox="0 0 20 16" className="ml-2.5 h-4 w-5" fill="none" stroke="#fff" strokeWidth="1.300">
        <path d="M1 5.500v5h3l5 4v-13l-5 4z" strokeLinejoin="round" />
        <path d="M11.500 5.500c1 1.500 1 3.500 0 5M14 3.500c2 3 2 6 0 9" />
        <path d="M16.500 1.500c3 4 3 9 0 13" stroke="#6d86ae" />
      </svg>
      <svg viewBox="0 0 20 16" className="mr-5 ml-2.5 h-4 w-5">
        <rect x="1" y="3" width="16" height="12" rx="3" fill="none" stroke="#fff" strokeWidth="1.400" />
        <rect x="3" y="5" width="12" height="8" rx="1" fill="#fff" />
        <path d="M18 7v4h2V7z" fill="#fff" />
        <path d="M4.500 0L0 5.500h3L2 10l5-6H4.500z" fill="#fff" stroke="#17427f" strokeWidth=".7" />
      </svg>
      <div className="pb-1 text-right">
        <div>3:28 PM</div>
        <div>5/23/2023</div>
      </div>
    </div>
  </div>
)

export default function App() {
  return (
    <div className="flex h-screen flex-col overflow-hidden font-['Open_Sans','Noto_Sans',sans-serif]">
      <TabBar />
      <Toolbar />
      <BookmarksBar />
      <AwsHeader />
      <div className="flex min-h-0 flex-1">
        <Sidebar />
        <MainPanel />
        <div className="flex w-[20px] shrink-0 flex-col items-center border-r border-[#c3c9cb] bg-[#f1f1f1]">
          <ScrollArrow className="mt-2 h-[5px] w-2.5 shrink-0 rotate-180 text-[#a3a3a3]" />
          <div className="mt-2 w-[17px] flex-1 bg-[#c1c1c1]" />
          <ScrollArrow className="my-2.5 h-[5px] w-2.5 shrink-0 text-[#505050]" />
        </div>
        <aside className="flex w-[50px] shrink-0 justify-center bg-white pt-[15px] text-[#545b64]">
          <button aria-label="Open info panel" className="self-start">
            <svg viewBox="0 0 20 20" className="size-5" fill="none" stroke="currentColor" strokeWidth="2">
              <circle cx="10" cy="10" r="9" />
              <path d="M8 9h2.500v5M7.500 14.500h5M9 5.800h2" />
            </svg>
          </button>
        </aside>
      </div>
      <Footer />
      <Taskbar />
    </div>
  )
}
